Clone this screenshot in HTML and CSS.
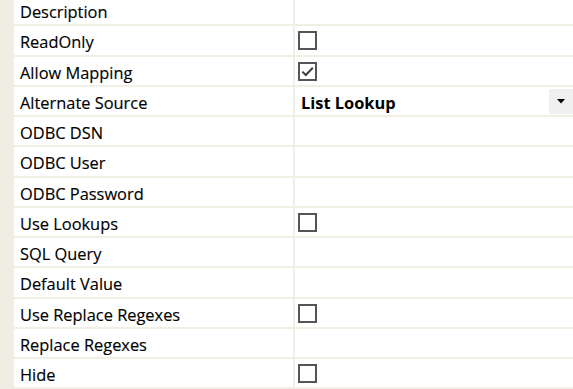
FILE: index.html
```html
<!DOCTYPE html>
<html>
<head>
<meta charset="utf-8">
<link rel="stylesheet" href="styles.css">
</head>
<body>
<div class="grid">
  <div class="row"><div class="gutter"></div><div class="name">Description</div><div class="value"></div></div>
  <div class="row"><div class="gutter"></div><div class="name">ReadOnly</div><div class="value"><span class="check"></span></div></div>
  <div class="row"><div class="gutter"></div><div class="name">Allow Mapping</div><div class="value"><span class="check"><svg viewBox="0 0 15 15" width="15" height="15"><path d="M2.3 7.6 L5.8 11 L12.8 3.8" fill="none" stroke="#3c3c3c" stroke-width="2"/></svg></span></div></div>
  <div class="row"><div class="gutter"></div><div class="name">Alternate Source</div><div class="value select"><span class="sel-text">List Lookup</span><span class="drop"><svg viewBox="0 0 8 5" width="8" height="5"><path d="M0 0 H8 L4 4.5 Z" fill="#000"/></svg></span></div></div>
  <div class="row"><div class="gutter"></div><div class="name">ODBC DSN</div><div class="value"></div></div>
  <div class="row"><div class="gutter"></div><div class="name">ODBC User</div><div class="value"></div></div>
  <div class="row"><div class="gutter"></div><div class="name">ODBC Password</div><div class="value"></div></div>
  <div class="row"><div class="gutter"></div><div class="name">Use Lookups</div><div class="value"><span class="check"></span></div></div>
  <div class="row"><div class="gutter"></div><div class="name">SQL Query</div><div class="value"></div></div>
  <div class="row"><div class="gutter"></div><div class="name">Default Value</div><div class="value"></div></div>
  <div class="row"><div class="gutter"></div><div class="name">Use Replace Regexes</div><div class="value"><span class="check"></span></div></div>
  <div class="row"><div class="gutter"></div><div class="name">Replace Regexes</div><div class="value"></div></div>
  <div class="row"><div class="gutter"></div><div class="name">Hide</div><div class="value"><span class="check"></span></div></div>
</div>
</body>
</html>
```
FILE: styles.css
```css
html, body {
  margin: 0;
  padding: 0;
  background: #fff;
  overflow: hidden;
}
body {
  width: 573px;
  height: 389px;
  font-family: "Open Sans", "DejaVu Sans", sans-serif;
  font-size: 16.4px;
  color: #000;
}
.grid {
  margin-top: -4px;
}
.row {
  display: grid;
  grid-template-columns: 14px 281px 1fr;
  height: 30.25px;
  box-sizing: border-box;
}
.gutter {
  background: #f0ede3;
}
.name {
  display: flex;
  align-items: center;
  padding-left: 6px;
  padding-top: 3px;
  border-bottom: 2px solid #f1efe3;
  border-right: 2px solid #f1efe3;
  white-space: nowrap;
  -webkit-text-stroke: 0.15px #000;
}
.value {
  display: flex;
  align-items: center;
  padding-left: 3px;
  border-bottom: 2px solid #f1efe3;
}
.check {
  width: 15px;
  height: 15px;
  border: 2px solid #555;
  display: flex;
  align-items: center;
  justify-content: center;
  margin-top: 1px;
}
.select {
  justify-content: space-between;
  padding-right: 0;
  padding-left: 6px;
}
.sel-text {
  font-weight: bold;
  padding-top: 3px;
}
.drop {
  width: 24px;
  align-self: stretch;
  margin: 2px 0 1px;
  background: #f0f0f0;
  display: flex;
  align-items: center;
  justify-content: center;
}
```
